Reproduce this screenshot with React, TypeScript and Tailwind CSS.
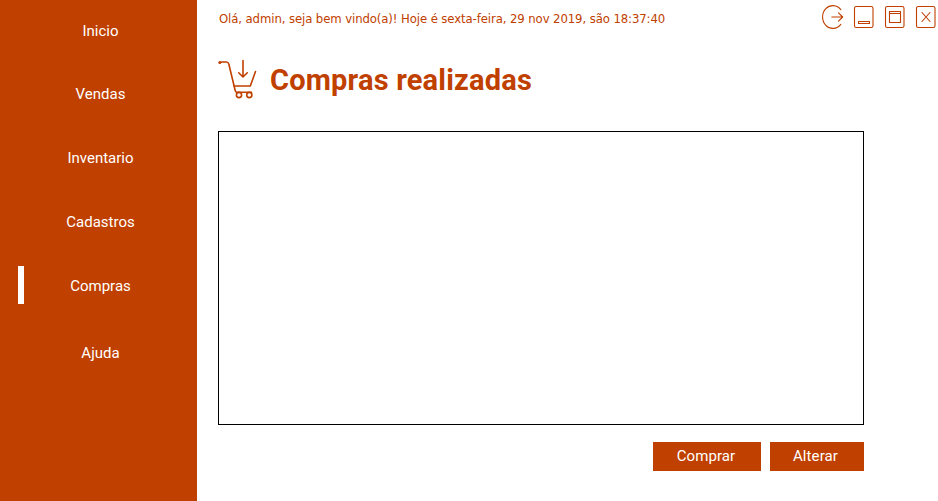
import React from "react";

const navItems = [
  { label: "Inicio", box: "h-[62px]" },
  { label: "Vendas", box: "h-[64px]" },
  { label: "Inventario", box: "h-[64px]" },
  { label: "Cadastros", box: "h-[64px]" },
  { label: "Compras", box: "h-[64px]" },
  { label: "Ajuda", box: "h-[70px]" },
];

function Sidebar() {
  return (
    <nav className="flex w-[197px] shrink-0 flex-col bg-[#c04000] text-[15px] text-white">
      {navItems.map(({ label, box }) => (
        <a key={label} className={`relative flex items-center justify-center pl-[4px] ${box}`}>
          {label === "Compras" && <span className="absolute left-[17.5px] top-[12px] h-[38px] w-[6.5px] bg-white" />}
          <span>{label}</span>
        </a>
      ))}
    </nav>
  );
}

function CartIcon() {
  return (
    <svg width="40" height="40" viewBox="218 59 40 40" fill="none" stroke="#c04000" strokeWidth="1.6" strokeLinecap="round" strokeLinejoin="round">
      <path d="M220 62.5 L222 62 H226.5 Q228.2 62 228.8 64 L235.2 90.5 Q235.6 92.3 237 92.3 H251.5" />
      <path d="M234 86 H250.3 L255.5 71.5" />
      <path d="M243 60.5 V76.8 M238.7 72.8 L243 77 L247.3 72.8" />
      <circle cx="239" cy="95" r="2.6" />
      <circle cx="249.3" cy="95" r="2.6" />
      <circle cx="219.8" cy="62.6" r="1.5" fill="#c04000" stroke="none" />
    </svg>
  );
}

function WindowControls() {
  return (
    <svg width="118" height="28" viewBox="820 3 118 28" fill="none" stroke="#c04000" strokeWidth="1.1" strokeLinecap="round" strokeLinejoin="round">
      <path d="M840.8 9.7 A10.3 11.4 0 1 0 840.8 24.3" />
      <path d="M831.8 17 H842.5 M838.5 12.8 L842.7 17 L838.5 21.2" />
      <rect x="854.5" y="6.5" width="18.5" height="21" rx="1.8" />
      <rect x="858.5" y="21.5" width="11" height="2" />
      <rect x="885.5" y="6.5" width="18.5" height="21" rx="1.8" />
      <path d="M889.5 11.5 H900.5 V22.5 H889.5 Z M889.5 13.5 H900.5" />
      <rect x="916.5" y="6.5" width="18.5" height="21" rx="1.8" />
      <path d="M922 12.5 L930 21.5 M930 12.5 L922 21.5" />
    </svg>
  );
}

export default function App() {
  return (
    <div className="flex h-[501px] w-[938px] overflow-hidden bg-white font-['Roboto',sans-serif] text-[#c04000]">
      <Sidebar />
      <main className="flex min-w-0 flex-1 flex-col pl-[21px]">
        <header className="flex h-[34px] items-start justify-between pt-[3px]">
          <p className="pl-px pt-[6px] font-['DejaVu_Sans_Condensed','DejaVu_Sans',sans-serif] text-[13px] leading-[20px] tracking-[-0.1px] whitespace-nowrap">
            Olá, admin, seja bem vindo(a)! Hoje é sexta-feira, 29 nov 2019, são 18:37:40
          </p>
          <WindowControls />
        </header>
        <div className="mt-[25px] flex h-[40px] items-center gap-[12px]">
          <CartIcon />
          <h1 className="pt-[2px] text-[29px] leading-[36px] font-bold tracking-[0.2px] whitespace-nowrap">Compras realizadas</h1>
        </div>
        <section className="mt-[32px] h-[294px] w-[646px] border border-black bg-white" />
        <div className="mt-[17px] flex w-[646px] justify-end gap-[9px] text-[15px] tracking-[0.1px] text-white">
          <button className="h-[29px] w-[108px] pr-[2px] bg-[#c04000]">Comprar</button>
          <button className="h-[29px] w-[94px] pr-[3px] bg-[#c04000]">Alterar</button>
        </div>
      </main>
    </div>
  );
}
